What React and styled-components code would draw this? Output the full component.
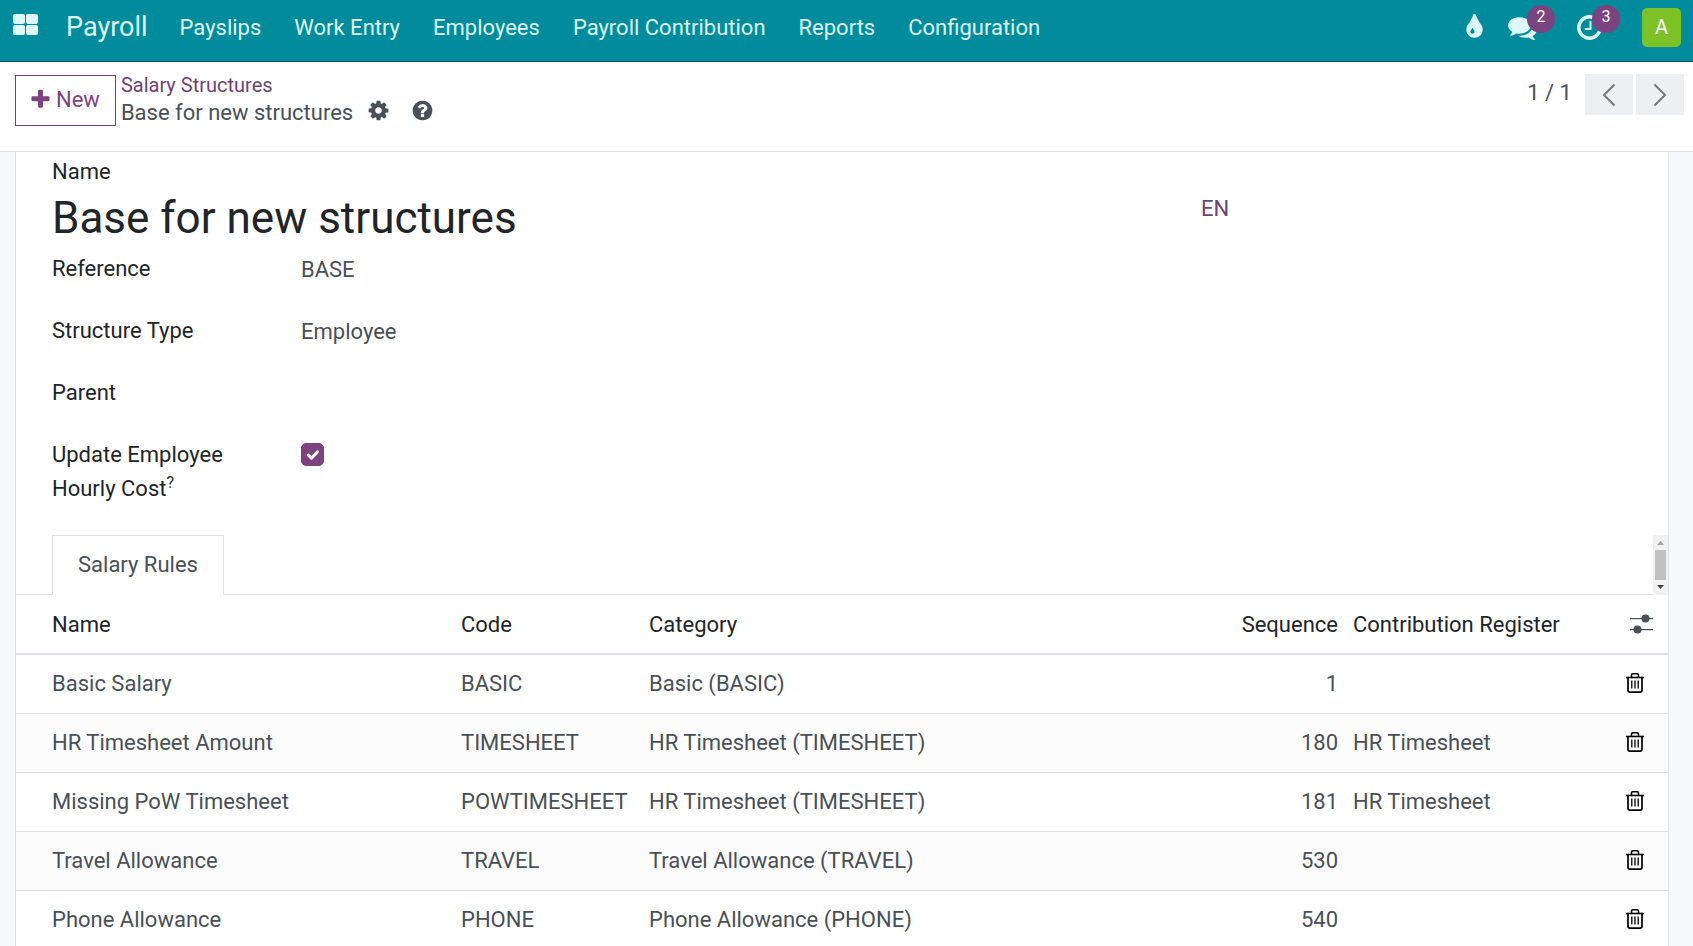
import React, { useState } from 'react';
import styled, { createGlobalStyle, ThemeProvider } from 'styled-components';

const theme = {
	teal: '#008c9c',
	tealDark: '#0b5662',
	navText: '#dff8f9',
	purple: '#7c4380',
	link: '#6f4276',
	text: '#212529',
	muted: '#495057',
	border: '#dee0e3',
	backdrop: '#f8f9fb',
	stripe: '#fcfcfc',
};

const GlobalStyle = createGlobalStyle`
	* {
		box-sizing: border-box;
	}
	body {
		margin: 0;
		background-color: #fff;
	}
	body, button, input {
		font-family: Roboto, sans-serif;
		font-size: 22px;
	}
`;

const Page = styled.div`
	display: flex;
	flex-direction: column;
	height: 100vh;
	color: ${({ theme }) => theme.muted};
`;

/* Top bar */

const Navbar = styled.header`
	display: flex;
	flex: none;
	justify-content: space-between;
	padding: 0 12px 7px;
	background-color: ${({ theme }) => theme.teal};
	border-bottom: 1px solid ${({ theme }) => theme.tealDark};
`;

const NavGroup = styled.nav`
	display: flex;
	align-items: center;
	height: 54px;
	gap: ${({ gap }) => gap || 0}px;
`;

const NavButton = styled.button`
	position: relative;
	display: flex;
	align-items: center;
	height: 30px;
	padding: 0;
	border: none;
	background: none;
	color: ${({ theme }) => theme.navText};
	cursor: pointer;
`;

const Brand = styled.a`
	margin: 0 32px 0 27px;
	font-size: 27px;
	color: ${({ theme }) => theme.navText};
	text-decoration: none;
`;

const NavLink = styled.a`
	color: ${({ theme }) => theme.navText};
	text-decoration: none;
	white-space: nowrap;
`;

const Badge = styled.span`
	position: absolute;
	top: -7px;
	right: -18px;
	width: 28px;
	height: 28px;
	border-radius: 50%;
	background-color: ${({ theme }) => theme.purple};
	color: #fff;
	font-size: 16px;
	line-height: 24px;
	text-align: center;
`;

const Avatar = styled.button`
	width: 39px;
	height: 39px;
	padding: 0;
	border: none;
	border-radius: 5px;
	background-color: #7cc226;
	color: #fff;
	font-size: 20px;
	line-height: 39px;
`;

/* Control panel */

const ControlPanel = styled.section`
	display: flex;
	flex: none;
	align-items: flex-start;
	height: 90px;
	padding: 12px 9px 0 15px;
	border-bottom: 1px solid ${({ theme }) => theme.border};
`;

const NewButton = styled.button`
	display: flex;
	align-items: center;
	gap: 4px;
	height: 51px;
	margin-top: 1px;
	padding: 0 15px 2px 13px;
	border: 1px solid ${({ theme }) => theme.link};
	background-color: #fff;
	color: ${({ theme }) => theme.purple};
	cursor: pointer;
`;

const Breadcrumb = styled.div`
	display: flex;
	flex: 1;
	flex-direction: column;
	margin-left: 5px;
`;

const CrumbLink = styled.a`
	align-self: flex-start;
	font-size: 20px;
	line-height: 22px;
	color: ${({ theme }) => theme.link};
	text-decoration: none;
`;

const CurrentCrumb = styled.div`
	display: flex;
	align-items: flex-start;
	line-height: 34px;
`;

const IconButton = styled.button`
	display: flex;
	margin-left: ${({ gap }) => gap || 0}px;
	padding: 0;
	border: none;
	background: none;
	color: ${({ color, theme }) => color || theme.muted};
	cursor: pointer;
`;

const CrumbActions = styled.div`
	display: flex;
	align-items: flex-start;
	margin-left: 14px;
	padding-top: 3px;
`;

const Pager = styled.div`
	display: flex;
	align-items: flex-start;
	gap: 3px;
`;

const PagerCount = styled.span`
	margin-right: 10px;
	line-height: 38px;
`;

const PagerButton = styled.button`
	display: flex;
	align-items: center;
	justify-content: center;
	width: 48px;
	height: 41px;
	padding: 0;
	border: none;
	background-color: #eeeff1;
	color: #75787b;
`;

/* Form */

const Content = styled.main`
	flex: 1;
	min-height: 0;
	padding: 0 24px 0 15px;
	overflow-y: auto;
	scrollbar-width: none;
	background-color: ${({ theme }) => theme.backdrop};
`;

const Sheet = styled.form`
	min-height: 100%;
	padding-top: 3px;
	border: solid ${({ theme }) => theme.border};
	border-width: 0 1px;
	background-color: #fff;
`;

const Fields = styled.div`
	padding: 0 36px;
`;

const Label = styled.label`
	display: block;
	line-height: 34px;
	color: ${({ theme }) => theme.text};
	& > sup {
		font-size: 16px;
		line-height: 0;
	}
`;

const TitleRow = styled.div`
	display: grid;
	grid-template-columns: 1149px 1fr;
	align-items: start;
	margin-bottom: 5px;
`;

const TitleInput = styled.input`
	width: 100%;
	height: 58px;
	padding: 0;
	border: none;
	outline: none;
	font-size: 44px;
	color: ${({ theme }) => theme.text};
`;

const LangButton = styled.button`
	justify-self: start;
	padding: 0;
	border: none;
	background: none;
	line-height: 40px;
	color: ${({ theme }) => theme.link};
`;

const FieldGrid = styled.div`
	display: grid;
	grid-template-columns: 189px 1fr;
	column-gap: 60px;
	row-gap: 28px;
	margin-bottom: 29px;
`;

const FieldInput = styled.input`
	width: 480px;
	height: 34px;
	padding: 0;
	border: none;
	outline: none;
	background: none;
	color: ${({ theme }) => theme.muted};
`;

const CheckWrap = styled.span`
	position: relative;
	display: flex;
	width: 23px;
	height: 23px;
	margin-top: 5px;
	& > svg {
		position: absolute;
		inset: 0;
		pointer-events: none;
	}
`;

const Checkbox = styled.input`
	width: 23px;
	height: 23px;
	margin: 0;
	appearance: none;
	border: 1px solid ${({ theme }) => theme.purple};
	border-radius: 5px;
	background-color: #fff;
	&:checked {
		background-color: ${({ theme }) => theme.purple};
	}
`;

/* Tabs */

const TabBar = styled.div`
	display: flex;
	height: 60px;
`;

const TabStrip = styled.div`
	display: flex;
	flex: 1;
	padding-left: 36px;
	box-shadow: inset 0 -1px 0 ${({ theme }) => theme.border};
`;

const Tab = styled.button`
	padding: 0 25px 2px;
	border: 1px solid ${({ theme }) => theme.border};
	border-bottom-color: #fff;
	background-color: #fff;
	color: ${({ theme }) => theme.muted};
`;

const ScrollTrack = styled.div`
	display: flex;
	flex-direction: column;
	align-items: center;
	width: 15px;
	background-color: #f1f1f1;
`;

const ScrollThumb = styled.div`
	width: 11px;
	height: 30px;
	background-color: #c1c1c1;
`;

/* Rules table */

const Table = styled.table`
	width: 100%;
	table-layout: fixed;
	border-spacing: 0;
`;

const Col = styled.col`
	width: ${({ $width }) => ($width ? `${$width}px` : 'auto')};
`;

const HeadCell = styled.th`
	height: 60px;
	padding: 0 7px 0 8px;
	border-bottom: 2px solid ${({ theme }) => theme.border};
	color: ${({ theme }) => theme.text};
	font-weight: 400;
	text-align: ${({ align }) => align || 'left'};
	white-space: nowrap;
	&:first-child {
		padding-left: 36px;
	}
`;

const Row = styled.tr`
	background-color: #fff;
	&:nth-child(even) {
		background-color: ${({ theme }) => theme.stripe};
	}
`;

const Cell = styled.td`
	height: 59px;
	padding: 0 7px 2px 8px;
	border-bottom: 1px solid ${({ theme }) => theme.border};
	text-align: ${({ align }) => align || 'left'};
	white-space: nowrap;
	&:first-child {
		padding-left: 36px;
	}
`;

const Glyph = ({ d, size = 23 }) => (
	<svg width={size} height={size} viewBox="0 0 1792 1792" fill="currentColor" aria-hidden="true">
		<path d={d} />
	</svg>
);

const GLYPHS = {
	plus: 'M1600 736v192q0 40-28 68t-68 28h-416v416q0 40-28 68t-68 28h-192q-40 0-68-28t-28-68v-416h-416q-40 0-68-28t-28-68v-192q0-40 28-68t68-28h416v-416q0-40 28-68t68-28h192q40 0 68 28t28 68v416h416q40 0 68 28t28 68z',
	tint: 'M896 1152q0-36-20-69-1-1-15.5-22.5t-25.5-38-25-44-21-50.5q-4-16-21-16t-21 16q-7 23-21 50.5t-25 44-25.5 38-15.5 22.5q-20 33-20 69 0 53 37.5 90.5t90.5 37.5 90.5-37.5 37.5-90.5zm512-128q0 212-150 362t-362 150-362-150-150-362q0-145 81-275 6-9 62.5-90.5t101-151 99.5-178 83-201.5q9-30 34-47t51-17 51.5 17 33.5 47q28 93 83 201.5t99.5 178 101 151 62.5 90.5q81 127 81 275z',
	comments: 'M1408 768q0 139-94 257t-256.5 186.5-353.5 68.5q-86 0-176-16-124 88-278 128-36 9-86 16h-3q-11 0-20.5-8t-11.5-21q-1-3-1-6.5t.5-6.5 2-6l2.5-5 3.5-5.5 4-5 4.5-5 4-4.5q5-6 23-25t26-29.5 22.5-29 25-38.5 20.5-44q-124-72-195-177t-71-224q0-139 94-257t256.5-186.5 353.5-68.5 353.5 68.5 256.5 186.5 94 257zm384 256q0 120-71 224.5t-195 176.5q10 24 20.5 44t25 38.5 22.5 29 26 29.5 23 25q1 1 4 4.5t4.5 5 4 5 3.5 5.5l2.5 5 2 6 .5 6.5-1 6.5q-3 14-13 22t-22 7q-50-7-86-16-154-40-278-128-90 16-176 16-271 0-472-132 58 4 88 4 161 0 309-45t264-129q125-92 192-212t67-254q0-77-23-152 129 71 204 178t75 230z',
	cog: 'M1152 896q0-106-75-181t-181-75-181 75-75 181 75 181 181 75 181-75 75-181zm512-109v222q0 12-8 23t-20 13l-185 28q-19 54-39 91 35 50 107 138 10 12 10 25t-9 23q-27 37-99 108t-94 71q-12 0-26-9l-138-108q-44 23-91 38-16 136-29 186-7 28-36 28h-222q-14 0-24.5-8.5t-11.5-21.5l-28-184q-49-16-90-37l-141 107q-10 9-25 9-14 0-25-11-126-114-165-168-7-10-7-23 0-12 8-23 15-21 51-66.5t54-70.5q-27-50-41-99l-183-27q-13-2-21-12.5t-8-23.5v-222q0-12 8-23t19-13l186-28q14-46 39-92-40-57-107-138-10-12-10-24 0-10 9-23 26-36 98.5-107.5t94.5-71.5q13 0 26 10l138 107q44-23 91-38 16-136 29-186 7-28 36-28h222q14 0 24.5 8.5t11.5 21.5l28 184q49 16 90 37l142-107q9-9 24-9 13 0 25 10 129 119 165 170 7 8 7 22 0 12-8 23-15 21-51 66.5t-54 70.5q26 50 41 98l183 28q13 2 21 12.5t8 23.5z',
	question: 'M1024 1376v-192q0-14-9-23t-23-9h-192q-14 0-23 9t-9 23v192q0 14 9 23t23 9h192q14 0 23-9t9-23zm256-672q0-88-55.5-163t-138.5-116-170-41q-243 0-371 213-15 24 8 42l132 100q7 6 19 6 16 0 25-12 53-68 86-92 34-24 86-24 48 0 85.5 26t37.5 59q0 38-20 61t-68 45q-63 28-115.5 86.5t-52.5 125.5v36q0 14 9 23t23 9h192q14 0 23-9t9-23q0-19 21.5-49.5t54.5-49.5q32-18 49-28.5t46-35 44.5-48 28-60.5 12.5-81zm384 192q0 209-103 385.5t-279.5 279.5-385.5 103-385.5-103-279.5-279.5-103-385.5 103-385.5 279.5-279.5 385.5-103 385.5 103 279.5 279.5 103 385.5z',
};

const AppsIcon = () => (
	<svg width="27" height="26" viewBox="0 0 27 26" fill="currentColor" aria-hidden="true">
		<rect x="1" y="0" width="12" height="10" rx="2" />
		<rect x="14" y="0" width="12" height="10" rx="2" />
		<rect x="1" y="11" width="12" height="10" rx="2" />
		<rect x="14" y="11" width="12" height="10" rx="2" />
	</svg>
);

const ClockIcon = () => (
	<svg width="25" height="25" viewBox="0 0 25 25" fill="none" stroke="currentColor" aria-hidden="true">
		<circle cx="12.5" cy="12.5" r="10.7" strokeWidth="3.4" />
		<path d="M13.5 7v7h-5" strokeWidth="2" strokeLinecap="round" strokeLinejoin="round" />
	</svg>
);

const Chevron = ({ flip }) => (
	<svg width="14" height="24" viewBox="0 0 14 24" fill="none" stroke="currentColor" strokeWidth="2" aria-hidden="true">
		<path d={flip ? 'M1.5 1.5 12 12 1.5 22.5' : 'M12.5 1.5 2 12l10.5 10.5'} />
	</svg>
);

const SlidersIcon = () => (
	<svg width="23" height="20" viewBox="0 0 23 20" fill="currentColor" aria-hidden="true">
		<path d="M0 4h23v1.3H0zM0 15h23v1.3H0z" />
		<circle cx="15.5" cy="4.6" r="4" />
		<circle cx="7.5" cy="15.6" r="4" />
	</svg>
);

const TrashIcon = () => (
	<svg width="18" height="20" viewBox="0 0 18 20" fill="none" stroke="currentColor" aria-hidden="true">
		<path d="M0 4.5h18" strokeWidth="1.6" />
		<path d="M5.5 4V2.2q0-1.4 1.4-1.4h4.2q1.4 0 1.4 1.4V4" strokeWidth="1.5" />
		<path d="M2 4.5v12.7q0 1.9 1.9 1.9h10.2q1.9 0 1.9-1.9V4.5" strokeWidth="1.7" />
		<path d="M5.8 7.5v8M9 7.5v8M12.2 7.5v8" strokeWidth="1.3" />
	</svg>
);

const CheckMark = () => (
	<svg width="23" height="23" viewBox="0 0 23 23" fill="none" stroke="#fff" strokeWidth="3" strokeLinecap="round" strokeLinejoin="round" aria-hidden="true">
		<path d="m7.3 12 3.2 3.2 6-6.4" />
	</svg>
);

const ScrollArrow = ({ down }) => (
	<svg width="15" height="15" viewBox="0 0 15 15" aria-hidden="true">
		<path d={down ? 'M4 5h7L7.5 9z' : 'M4 10h7L7.5 6z'} fill={down ? '#404040' : '#a3a3a3'} />
	</svg>
);

const MENU = ['Payslips', 'Work Entry', 'Employees', 'Payroll Contribution', 'Reports', 'Configuration'];

const RULES = [
	{ name: 'Basic Salary', code: 'BASIC', category: 'Basic (BASIC)', sequence: 1, register: '' },
	{ name: 'HR Timesheet Amount', code: 'TIMESHEET', category: 'HR Timesheet (TIMESHEET)', sequence: 180, register: 'HR Timesheet' },
	{ name: 'Missing PoW Timesheet', code: 'POWTIMESHEET', category: 'HR Timesheet (TIMESHEET)', sequence: 181, register: 'HR Timesheet' },
	{ name: 'Travel Allowance', code: 'TRAVEL', category: 'Travel Allowance (TRAVEL)', sequence: 530, register: '' },
	{ name: 'Phone Allowance', code: 'PHONE', category: 'Phone Allowance (PHONE)', sequence: 540, register: '' },
];

const TopBar = () => (
	<Navbar>
		<NavGroup>
			<NavButton aria-label="Apps">
				<AppsIcon />
			</NavButton>
			<Brand href="#">Payroll</Brand>
			<NavGroup as="div" gap={33}>
				{MENU.map((item) => (
					<NavLink key={item} href="#">{item}</NavLink>
				))}
			</NavGroup>
		</NavGroup>
		<NavGroup as="div" gap={40}>
			<NavGroup as="div" gap={19}>
				<NavButton aria-label="Theme">
					<Glyph d={GLYPHS.tint} size={29} />
				</NavButton>
				<NavGroup as="div" gap={40}>
					<NavButton aria-label="Messages">
						<Glyph d={GLYPHS.comments} size={29} />
						<Badge>2</Badge>
					</NavButton>
					<NavButton aria-label="Activities">
						<ClockIcon />
						<Badge>3</Badge>
					</NavButton>
				</NavGroup>
			</NavGroup>
			<Avatar type="button">A</Avatar>
		</NavGroup>
	</Navbar>
);

const RulesTable = () => (
	<Table>
		<colgroup>
			<Col $width={437} />
			<Col $width={188} />
			<Col />
			<Col $width={120} />
			<Col $width={250} />
			<Col $width={73} />
		</colgroup>
		<thead>
			<tr>
				<HeadCell>Name</HeadCell>
				<HeadCell>Code</HeadCell>
				<HeadCell>Category</HeadCell>
				<HeadCell align="right">Sequence</HeadCell>
				<HeadCell>Contribution Register</HeadCell>
				<HeadCell>
					<IconButton type="button" gap={27} aria-label="Optional columns">
						<SlidersIcon />
					</IconButton>
				</HeadCell>
			</tr>
		</thead>
		<tbody>
			{RULES.map(({ name, code, category, sequence, register }) => (
				<Row key={code}>
					<Cell>{name}</Cell>
					<Cell>{code}</Cell>
					<Cell>{category}</Cell>
					<Cell align="right">{sequence}</Cell>
					<Cell>{register}</Cell>
					<Cell>
						<IconButton type="button" gap={23} color="#000" aria-label={`Delete ${name}`}>
							<TrashIcon />
						</IconButton>
					</Cell>
				</Row>
			))}
		</tbody>
	</Table>
);

const App = () => {
	const [title, setTitle] = useState('Base for new structures');
	const [updateCost, setUpdateCost] = useState(true);

	return (
		<ThemeProvider theme={theme}>
			<GlobalStyle />
			<Page>
				<TopBar />
				<ControlPanel>
					<NewButton type="button">
						<Glyph d={GLYPHS.plus} />
						New
					</NewButton>
					<Breadcrumb>
						<CrumbLink href="#">Salary Structures</CrumbLink>
						<CurrentCrumb>
							Base for new structures
							<CrumbActions>
								<IconButton type="button" aria-label="Actions">
									<Glyph d={GLYPHS.cog} />
								</IconButton>
								<IconButton type="button" gap={21} aria-label="Help">
									<Glyph d={GLYPHS.question} />
								</IconButton>
							</CrumbActions>
						</CurrentCrumb>
					</Breadcrumb>
					<Pager>
						<PagerCount>1 / 1</PagerCount>
						<PagerButton type="button" aria-label="Previous">
							<Chevron />
						</PagerButton>
						<PagerButton type="button" aria-label="Next">
							<Chevron flip />
						</PagerButton>
					</Pager>
				</ControlPanel>
				<Content>
					<Sheet>
						<Fields>
							<Label htmlFor="name">Name</Label>
							<TitleRow>
								<TitleInput id="name" value={title} onChange={(e) => setTitle(e.target.value)} />
								<LangButton type="button">EN</LangButton>
							</TitleRow>
							<FieldGrid>
								<Label htmlFor="reference">Reference</Label>
								<FieldInput id="reference" defaultValue="BASE" />
								<Label htmlFor="type">Structure Type</Label>
								<FieldInput id="type" defaultValue="Employee" />
								<Label htmlFor="parent">Parent</Label>
								<FieldInput id="parent" />
								<Label htmlFor="hourly">
									Update Employee Hourly Cost<sup>?</sup>
								</Label>
								<CheckWrap>
									<Checkbox
										id="hourly"
										type="checkbox"
										checked={updateCost}
										onChange={(e) => setUpdateCost(e.target.checked)}
									/>
									{updateCost && <CheckMark />}
								</CheckWrap>
							</FieldGrid>
						</Fields>
						<TabBar>
							<TabStrip>
								<Tab type="button">Salary Rules</Tab>
							</TabStrip>
							<ScrollTrack>
								<ScrollArrow />
								<ScrollThumb />
								<ScrollArrow down />
							</ScrollTrack>
						</TabBar>
						<RulesTable />
					</Sheet>
				</Content>
			</Page>
		</ThemeProvider>
	);
};

export default App;
